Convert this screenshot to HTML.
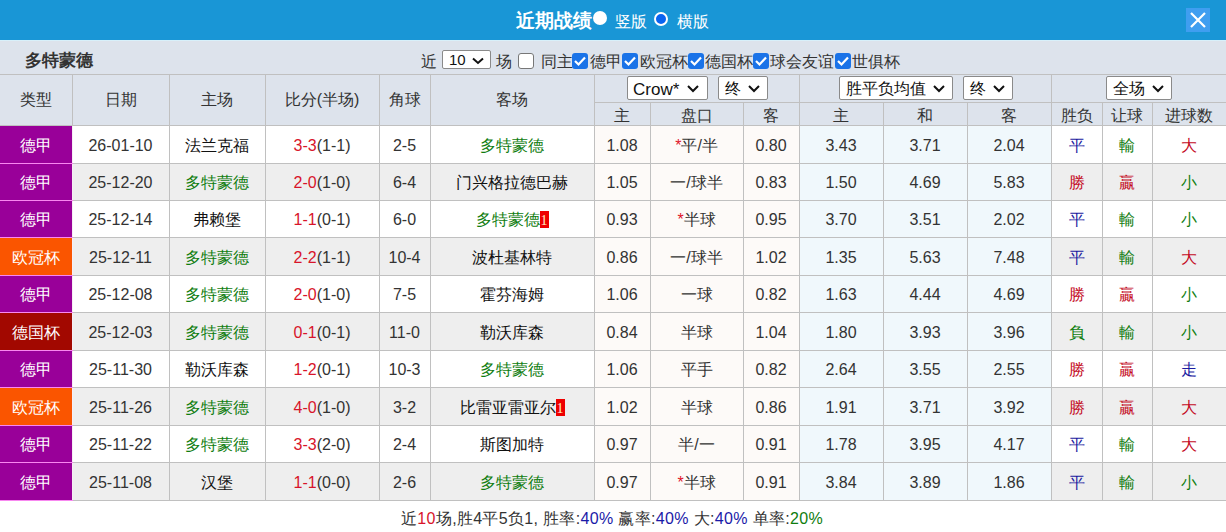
<!DOCTYPE html>
<html><head><meta charset="utf-8">
<style>
*{margin:0;padding:0;box-sizing:border-box;}
html,body{width:1226px;height:532px;overflow:hidden;background:#fff;font-family:"Liberation Sans",sans-serif;font-size:16px;color:#333;position:relative;}
#hd{position:absolute;left:0;top:0;width:1226px;height:40px;background:#1996d6;}
#hd .t{position:absolute;left:516px;top:10px;font-size:19px;font-weight:bold;color:#fff;line-height:22px;}
#hd .r1{position:absolute;left:593px;top:11px;width:14px;height:14px;border-radius:50%;background:#fff;}
#hd .l1{position:absolute;left:615px;top:12px;color:#fff;font-size:16px;line-height:20px;}
#hd .r2{position:absolute;left:654px;top:12px;width:14px;height:14px;border-radius:50%;background:#0a64f0;border:2px solid #fff;}
#hd .l2{position:absolute;left:677px;top:12px;color:#fff;font-size:16px;line-height:20px;}
#hd .x{position:absolute;left:1186px;top:8px;width:24px;height:24px;background:#3f9ef0;}
#bar{position:absolute;left:0;top:40px;width:1226px;height:34px;background:#dde3ec;border-top:1px solid #d8f0fa;}
.ab{position:absolute;white-space:nowrap;line-height:20px;}
#bar .team{left:25px;top:10px;font-weight:bold;color:#333;font-size:16.8px;}
.sel{position:absolute;background:#fff;border:1px solid #8a8a8a;border-radius:2px;color:#111;font-size:16px;}
.sel span{position:absolute;left:6px;top:0;line-height:20px;white-space:nowrap;}
.sel svg{position:absolute;}
.cb{position:absolute;width:16px;height:16px;border-radius:3px;}
.cb.on{background:#1a73e8;}
.cb.off{background:#fff;border:1px solid #777;}
table{position:absolute;left:0;top:74px;border-collapse:collapse;table-layout:fixed;width:1226px;}
td{border:1px solid #c0c0c0;text-align:center;padding:0;overflow:hidden;white-space:nowrap;line-height:20px;}
thead td{background:#dde3ec;color:#333;}
.ev td{background:#eeeeee;}
.od td{background:#fff;}
tr td.ao{background:#fdfaf8;}
tr td.eo{background:#f0f8fc;}
td.lg{color:#fff;border-color:#f888f0;border-right-color:#f6eef6;}
td.lg.p{background:#990099 !important;}
td.lg.o{background:#fa5500 !important;}
td.lg.d{background:#a20800 !important;}
.g{color:#0f7d0f;}
.k{color:#111;}
.r{color:#c40a1e;}
.b{color:#1a1aa0;}
.rd{color:#d8142a;}
.st{color:#e0142a;}
.bd{display:inline-block;background:#ee0000;color:#fff0c8;font-family:"Liberation Serif",serif;font-size:14px;line-height:17px;height:17px;padding-top:1px;width:9px;vertical-align:-3px;text-align:center;overflow:hidden;box-sizing:border-box;}
#ft{position:absolute;left:401px;top:509px;line-height:20px;white-space:nowrap;color:#333;}
#ft .n{color:#d8142a;}
#ft .bl{color:#1a1aa8;}
#ft .gr{color:#0f7d0f;}

tbody td{padding-top:2px;}
tr.sub td{padding-top:3px;line-height:18px;}
table td:first-child{border-left:none;}
table td:last-child{border-right:none;}
#ft{letter-spacing:0.33px;}
</style></head><body>
<div id="hd">
  <div class="t">近期战绩</div>
  <div class="r1"></div><div class="l1">竖版</div>
  <div class="r2"></div><div class="l2">横版</div>
  <div class="x"><svg width="24" height="24" viewBox="0 0 24 24"><path d="M5 5L19 19M19 5L5 19" stroke="#fff" stroke-width="2.2"/></svg></div>
</div>
<div id="bar">
  <div class="ab team">多特蒙德</div>
  <div class="ab" style="left:421px;top:11px">近</div>
  <div class="sel" style="left:442px;top:9px;width:49px;height:19px"><span style="font-size:15px;left:6px;top:-1px">10</span><svg style="left:29px;top:6px" width="12" height="8" viewBox="0 0 12 8"><path d="M1 1.5L6 6L11 1.5" stroke="#111" stroke-width="2" fill="none"/></svg></div>
  <div class="ab" style="left:496px;top:11px">场</div>
  <div class="cb off" style="left:518px;top:12px"></div>
  <div class="ab" style="left:541px;top:11px">同主</div>
  <div class="cb on" style="left:572px;top:12px"><svg width="16" height="16" viewBox="0 0 16 16"><path d="M3 8L6.5 11.5L13 4.5" stroke="#fff" stroke-width="2.2" fill="none"/></svg></div>
  <div class="ab" style="left:590px;top:11px">德甲</div>
  <div class="cb on" style="left:622px;top:12px"><svg width="16" height="16" viewBox="0 0 16 16"><path d="M3 8L6.5 11.5L13 4.5" stroke="#fff" stroke-width="2.2" fill="none"/></svg></div>
  <div class="ab" style="left:640px;top:11px">欧冠杯</div>
  <div class="cb on" style="left:688px;top:12px"><svg width="16" height="16" viewBox="0 0 16 16"><path d="M3 8L6.5 11.5L13 4.5" stroke="#fff" stroke-width="2.2" fill="none"/></svg></div>
  <div class="ab" style="left:705px;top:11px">德国杯</div>
  <div class="cb on" style="left:753px;top:12px"><svg width="16" height="16" viewBox="0 0 16 16"><path d="M3 8L6.5 11.5L13 4.5" stroke="#fff" stroke-width="2.2" fill="none"/></svg></div>
  <div class="ab" style="left:770px;top:11px">球会友谊</div>
  <div class="cb on" style="left:835px;top:12px"><svg width="16" height="16" viewBox="0 0 16 16"><path d="M3 8L6.5 11.5L13 4.5" stroke="#fff" stroke-width="2.2" fill="none"/></svg></div>
  <div class="ab" style="left:852px;top:11px">世俱杯</div>
</div>
<table>
<colgroup><col style="width:72px"><col style="width:97px"><col style="width:96px"><col style="width:114px"><col style="width:51px"><col style="width:164px"><col style="width:56px"><col style="width:93px"><col style="width:56px"><col style="width:84px"><col style="width:84px"><col style="width:84px"><col style="width:51px"><col style="width:50px"><col style="width:74px"></colgroup>
<thead>
<tr style="height:28px"><td rowspan="2">类型</td><td rowspan="2">日期</td><td rowspan="2">主场</td><td rowspan="2">比分(半场)</td><td rowspan="2">角球</td><td rowspan="2">客场</td><td colspan="3" style="position:relative"></td><td colspan="3"></td><td colspan="3"></td></tr>
<tr class="sub" style="height:23px"><td>主</td><td>盘口</td><td>客</td><td>主</td><td>和</td><td>客</td><td>胜负</td><td>让球</td><td>进球数</td></tr>
</thead>
<tbody>
<tr class="od" style="height:38px"><td class="lg p">德甲</td><td class="dt">26-01-10</td><td class="tm k">法兰克福</td><td class="sc"><span class="rd">3-3</span>(1-1)</td><td class="cn">2-5</td><td class="tm g">多特蒙德</td><td class="ao">1.08</td><td class="ao pk"><span class="st">*</span>平/半</td><td class="ao">0.80</td><td class="eo">3.43</td><td class="eo">3.71</td><td class="eo">2.04</td><td class="rs b">平</td><td class="rs g">輸</td><td class="rs r">大</td></tr>
<tr class="ev" style="height:37px"><td class="lg p">德甲</td><td class="dt">25-12-20</td><td class="tm g">多特蒙德</td><td class="sc"><span class="rd">2-0</span>(1-0)</td><td class="cn">6-4</td><td class="tm k">门兴格拉德巴赫</td><td class="ao">1.05</td><td class="ao pk">一/球半</td><td class="ao">0.83</td><td class="eo">1.50</td><td class="eo">4.69</td><td class="eo">5.83</td><td class="rs r">勝</td><td class="rs r">贏</td><td class="rs g">小</td></tr>
<tr class="od" style="height:37px"><td class="lg p">德甲</td><td class="dt">25-12-14</td><td class="tm k">弗赖堡</td><td class="sc"><span class="rd">1-1</span>(0-1)</td><td class="cn">6-0</td><td class="tm g">多特蒙德<span class="bd">1</span></td><td class="ao">0.93</td><td class="ao pk"><span class="st">*</span>半球</td><td class="ao">0.95</td><td class="eo">3.70</td><td class="eo">3.51</td><td class="eo">2.02</td><td class="rs b">平</td><td class="rs g">輸</td><td class="rs g">小</td></tr>
<tr class="ev" style="height:38px"><td class="lg o">欧冠杯</td><td class="dt">25-12-11</td><td class="tm g">多特蒙德</td><td class="sc"><span class="rd">2-2</span>(1-1)</td><td class="cn">10-4</td><td class="tm k">波杜基林特</td><td class="ao">0.86</td><td class="ao pk">一/球半</td><td class="ao">1.02</td><td class="eo">1.35</td><td class="eo">5.63</td><td class="eo">7.48</td><td class="rs b">平</td><td class="rs g">輸</td><td class="rs r">大</td></tr>
<tr class="od" style="height:37px"><td class="lg p">德甲</td><td class="dt">25-12-08</td><td class="tm g">多特蒙德</td><td class="sc"><span class="rd">2-0</span>(1-0)</td><td class="cn">7-5</td><td class="tm k">霍芬海姆</td><td class="ao">1.06</td><td class="ao pk">一球</td><td class="ao">0.82</td><td class="eo">1.63</td><td class="eo">4.44</td><td class="eo">4.69</td><td class="rs r">勝</td><td class="rs r">贏</td><td class="rs g">小</td></tr>
<tr class="ev" style="height:38px"><td class="lg d">德国杯</td><td class="dt">25-12-03</td><td class="tm g">多特蒙德</td><td class="sc"><span class="rd">0-1</span>(0-1)</td><td class="cn">11-0</td><td class="tm k">勒沃库森</td><td class="ao">0.84</td><td class="ao pk">半球</td><td class="ao">1.04</td><td class="eo">1.80</td><td class="eo">3.93</td><td class="eo">3.96</td><td class="rs g">負</td><td class="rs g">輸</td><td class="rs g">小</td></tr>
<tr class="od" style="height:37px"><td class="lg p">德甲</td><td class="dt">25-11-30</td><td class="tm k">勒沃库森</td><td class="sc"><span class="rd">1-2</span>(0-1)</td><td class="cn">10-3</td><td class="tm g">多特蒙德</td><td class="ao">1.06</td><td class="ao pk">平手</td><td class="ao">0.82</td><td class="eo">2.64</td><td class="eo">3.55</td><td class="eo">2.55</td><td class="rs r">勝</td><td class="rs r">贏</td><td class="rs b">走</td></tr>
<tr class="ev" style="height:38px"><td class="lg o">欧冠杯</td><td class="dt">25-11-26</td><td class="tm g">多特蒙德</td><td class="sc"><span class="rd">4-0</span>(1-0)</td><td class="cn">3-2</td><td class="tm k">比雷亚雷亚尔<span class="bd">1</span></td><td class="ao">1.02</td><td class="ao pk">半球</td><td class="ao">0.86</td><td class="eo">1.91</td><td class="eo">3.71</td><td class="eo">3.92</td><td class="rs r">勝</td><td class="rs r">贏</td><td class="rs r">大</td></tr>
<tr class="od" style="height:37px"><td class="lg p">德甲</td><td class="dt">25-11-22</td><td class="tm g">多特蒙德</td><td class="sc"><span class="rd">3-3</span>(2-0)</td><td class="cn">2-4</td><td class="tm k">斯图加特</td><td class="ao">0.97</td><td class="ao pk">半/一</td><td class="ao">0.91</td><td class="eo">1.78</td><td class="eo">3.95</td><td class="eo">4.17</td><td class="rs b">平</td><td class="rs g">輸</td><td class="rs r">大</td></tr>
<tr class="ev" style="height:38px"><td class="lg p">德甲</td><td class="dt">25-11-08</td><td class="tm k">汉堡</td><td class="sc"><span class="rd">1-1</span>(0-0)</td><td class="cn">2-6</td><td class="tm g">多特蒙德</td><td class="ao">0.97</td><td class="ao pk"><span class="st">*</span>半球</td><td class="ao">0.91</td><td class="eo">3.84</td><td class="eo">3.89</td><td class="eo">1.86</td><td class="rs b">平</td><td class="rs g">輸</td><td class="rs g">小</td></tr>
</tbody></table>
<div class="sel" style="left:627px;top:76px;width:81px;height:24px"><span style="top:3px;font-size:17px;left:5px">Crow*</span><svg style="left:59px;top:8px" width="12" height="8" viewBox="0 0 12 8"><path d="M1 1L6 6L11 1" stroke="#111" stroke-width="2" fill="none"/></svg></div>
<div class="sel" style="left:718px;top:76px;width:50px;height:24px"><span style="top:2px">终</span><svg style="left:29px;top:8px" width="12" height="8" viewBox="0 0 12 8"><path d="M1 1L6 6L11 1" stroke="#111" stroke-width="2" fill="none"/></svg></div>
<div class="sel" style="left:839px;top:76px;width:114px;height:24px"><span style="top:2px">胜平负均值</span><svg style="left:93px;top:8px" width="12" height="8" viewBox="0 0 12 8"><path d="M1 1L6 6L11 1" stroke="#111" stroke-width="2" fill="none"/></svg></div>
<div class="sel" style="left:963px;top:76px;width:50px;height:24px"><span style="top:2px">终</span><svg style="left:29px;top:8px" width="12" height="8" viewBox="0 0 12 8"><path d="M1 1L6 6L11 1" stroke="#111" stroke-width="2" fill="none"/></svg></div>
<div class="sel" style="left:1106px;top:76px;width:66px;height:24px"><span style="top:2px">全场</span><svg style="left:45px;top:8px" width="12" height="8" viewBox="0 0 12 8"><path d="M1 1L6 6L11 1" stroke="#111" stroke-width="2" fill="none"/></svg></div>
<div id="ft">近<span class="n">10</span>场,胜4平5负1, 胜率:<span class="bl">40%</span> 赢率:<span class="bl">40%</span> 大:<span class="bl">40%</span> 单率:<span class="gr">20%</span></div>
</body></html>
